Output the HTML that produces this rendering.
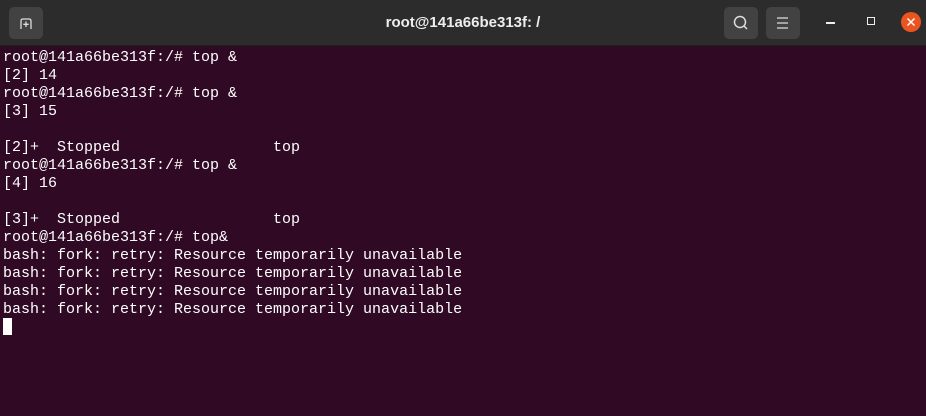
<html><head><style>
body{margin:0;width:926px;height:416px;background:#300a24;overflow:hidden;font-family:"Liberation Sans",sans-serif}
.hdr{position:absolute;left:0;top:0;width:926px;height:46px;background:#2c2c2c;border-bottom:1px solid #1e1e1e;box-sizing:border-box}
.btn{position:absolute;top:7px;width:34px;height:32px;background:#424242;border-radius:5px}
.title{position:absolute;top:14px;width:926px;text-align:center;color:#eee;font-weight:bold;font-size:15px}
pre{position:absolute;left:3px;top:49px;margin:0;font-family:"Liberation Mono",monospace;font-size:15px;line-height:18px;color:#fff}
.cur{position:absolute;left:3px;top:318px;width:9px;height:17px;background:#fff}
</style></head><body>
<div class="hdr">
<div class="btn" style="left:9px"><svg width="34" height="32"><path d="M12 22V14Q12 12 14 12H20Q22 12 22 14V22M17 14.5V20M14.3 17.3H19.7" stroke="#ddd" stroke-width="1.3" fill="none"/></svg></div>
<div class="title">root@141a66be313f: /</div>
<div class="btn" style="left:724px"><svg width="34" height="32"><circle cx="16" cy="15" r="5.5" stroke="#ddd" stroke-width="1.5" fill="none"/><path d="M20 19L23 22" stroke="#ddd" stroke-width="1.5"/></svg></div>
<div class="btn" style="left:766px"><svg width="34" height="32"><path d="M11 11H22M11 16H22M11 21H22" stroke="#ddd" stroke-width="1.3"/></svg></div>
<div style="position:absolute;left:826px;top:22px;width:9px;height:1.5px;background:#eee"></div>
<div style="position:absolute;left:867px;top:17px;width:6px;height:6px;border:1.5px solid #eee"></div>
<div style="position:absolute;left:901px;top:12px;width:20px;height:20px;border-radius:50%;background:#e95420"><svg width="20" height="20"><path d="M6.5 6.5L13.5 13.5M13.5 6.5L6.5 13.5" stroke="#fff" stroke-width="1.5"/></svg></div>
</div>
<pre>root@141a66be313f:/# top &amp;
[2] 14
root@141a66be313f:/# top &amp;
[3] 15

[2]+  Stopped                 top
root@141a66be313f:/# top &amp;
[4] 16

[3]+  Stopped                 top
root@141a66be313f:/# top&amp;
bash: fork: retry: Resource temporarily unavailable
bash: fork: retry: Resource temporarily unavailable
bash: fork: retry: Resource temporarily unavailable
bash: fork: retry: Resource temporarily unavailable</pre>
<div class="cur"></div>
</body></html>
